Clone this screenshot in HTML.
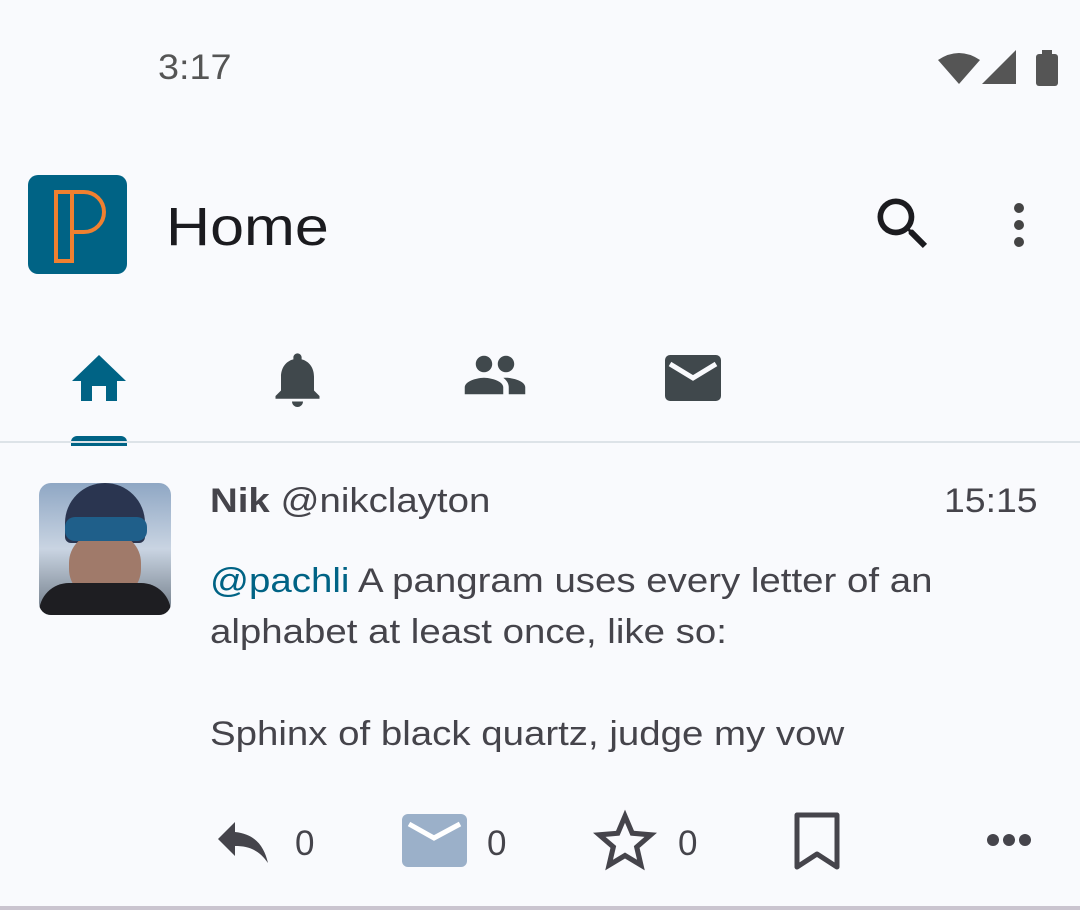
<!DOCTYPE html>
<html><head><meta charset="utf-8"><style>
body{margin:0;width:1080px;height:910px;background:#f9fafd;position:relative;overflow:hidden;font-family:"Liberation Sans",sans-serif;color:#45444b}
.a{position:absolute}
.s{transform-origin:0 0;transform:scaleX(1.13);white-space:nowrap}
</style></head><body>
<div class="a s" style="left:158px;top:48px;font-size:35px;color:#555;transform:scaleX(1.08)">3:17</div>
<svg class="a" style="left:936px;top:48px" width="126" height="40" viewBox="0 0 126 40">
<path d="M2 12 Q23 -2 44 12 L23 36 Z" fill="#555"/>
<path d="M46 36 L80 2 L80 36 Z" fill="#555"/>
<rect x="100" y="6" width="22" height="32" rx="3" fill="#555"/><rect x="106" y="2" width="10" height="6" fill="#555"/>
</svg>
<div class="a" style="left:28px;top:175px;width:99px;height:99px;border-radius:10px;background:#006385"></div>
<svg class="a" style="left:28px;top:175px" width="99" height="99" viewBox="0 0 99 99">
<path d="M28 17 H44 V86 H28 Z M44 17 H56 A20 20 0 0 1 56 57 H44" fill="none" stroke="#f08030" stroke-width="4"/>
<path d="M37 17 V86" stroke="#f08030" stroke-width="0"/>
</svg>
<div class="a s" style="left:166px;top:196px;font-size:54px;color:#1b1b1f">Home</div>
<svg class="a" style="left:868px;top:190px" width="70" height="68" viewBox="0 0 24 24"><path d="M15.5 14h-.79l-.28-.27A6.47 6.47 0 0016 9.5 6.5 6.5 0 109.5 16c1.61 0 3.09-.59 4.23-1.57l.27.28v.79l5 4.99L20.49 19l-4.99-5zm-6 0C7.01 14 5 11.99 5 9.5S7.01 5 9.5 5 14 7.01 14 9.5 11.99 14 9.5 14z" fill="#1b1b1f"/></svg>
<svg class="a" style="left:1008px;top:202px" width="22" height="46"><circle cx="11" cy="6" r="5" fill="#444"/><circle cx="11" cy="23" r="5" fill="#444"/><circle cx="11" cy="40" r="5" fill="#444"/></svg>
<svg class="a" style="left:71px;top:353px" width="56" height="48" viewBox="0 0 56 48"><path d="M28 2 L55 28 H46 V48 H35 V33 H21 V48 H10 V28 H1 Z" fill="#006385"/></svg>
<div class="a" style="left:71px;top:436px;width:56px;height:10px;border-radius:6px 6px 0 0;background:#006385"></div>
<svg class="a" style="left:275px;top:352px" width="45" height="55" viewBox="4 2 16 20"><path d="M12 22c1.1 0 2-.9 2-2h-4c0 1.1.9 2 2 2zm6-6v-5c0-3.07-1.63-5.64-4.5-6.32V4c0-.83-.67-1.5-1.5-1.5s-1.5.67-1.5 1.5v.68C7.64 5.36 6 7.92 6 11v5l-2 2v1h16v-1l-2-2z" fill="#40484c"/></svg>
<svg class="a" style="left:462px;top:342px" width="66" height="66" viewBox="0 0 24 24"><path d="M16 11c1.66 0 2.99-1.340 2.99-3S17.66 5 16 5c-1.66 0-3 1.34-3 3s1.34 3 3 3zm-8 0c1.66 0 2.99-1.34 2.99-3S9.66 5 8 5C6.34 5 5 6.34 5 8s1.34 3 3 3zm0 2c-2.33 0-7 1.17-7 3.5V19h14v-2.5c0-2.33-4.67-3.5-7-3.5zm8 0c-.29 0-.62.02-.97.05 1.16.84 1.970 1.97 1.97 3.45V19h6v-2.5c0-2.33-4.67-3.5-7-3.5z" fill="#40484c"/></svg>
<svg class="a" style="left:665px;top:355px" width="56" height="46" viewBox="0 0 56 46"><rect width="56" height="46" rx="5" fill="#40484c"/><path d="M5 9 L28 23 L51 9" stroke="#f9fafd" stroke-width="5" fill="none"/></svg>
<div class="a" style="left:0;top:441px;width:1080px;height:2px;background:#dde3e8"></div>
<div class="a" style="left:39px;top:483px;width:132px;height:132px;border-radius:12px;overflow:hidden;background:linear-gradient(180deg,#8fa7c4,#c9d4e2 50%,#6f7a86)">
<div class="a" style="left:26px;top:0;width:80px;height:60px;border-radius:40px 40px 6px 6px;background:#2a3550"></div>
<div class="a" style="left:30px;top:50px;width:72px;height:66px;border-radius:30px;background:#a07a6a"></div>
<div class="a" style="left:26px;top:34px;width:82px;height:24px;border-radius:10px;background:#1f5f8a"></div>
<div class="a" style="left:0;top:100px;width:132px;height:40px;border-radius:30px 30px 0 0;background:#1e1e22"></div>
</div>
<div class="a s" style="left:210px;top:482px;font-size:34px"><b>Nik</b> @nikclayton</div>
<div class="a s" style="left:944px;top:482px;font-size:34px;transform:scaleX(1.1)">15:15</div>
<div class="a s" style="left:210px;top:556px;font-size:34px;line-height:51px"><span style="color:#006385">@pachli</span> A pangram uses every letter of an<br>alphabet at least once, like so:<br><br>Sphinx of black quartz, judge my vow</div>
<svg class="a" style="left:217px;top:820px" width="52" height="44" viewBox="0 0 52 44"><path d="M18 2 L1 19 L18 36 V26 C32 26 42 30 51 43 C47 26 38 14 18 12 Z" fill="#45444b"/></svg>
<div class="a" style="left:295px;top:824px;font-size:35px">0</div>
<svg class="a" style="left:402px;top:814px" width="65" height="53" viewBox="0 0 65 53"><rect width="65" height="53" rx="6" fill="#9bb0c9"/><path d="M7 10 L32 24 L58 10" stroke="#fff" stroke-width="5" fill="none"/></svg>
<div class="a" style="left:487px;top:824px;font-size:35px">0</div>
<svg class="a" style="left:593px;top:809px" width="64" height="62" viewBox="2 2 20 19"><path d="M22 9.24l-7.19-.62L12 2 9.19 8.63 2 9.24l5.46 4.73L5.82 21 12 17.27 18.18 21l-1.63-7.03L22 9.24zM12 15.4l-3.76 2.27 1-4.28-3.32-2.88 4.38-.38L12 6.1l1.71 4.04 4.38.38-3.32 2.88 1 4.28L12 15.4z" fill="#45444b"/></svg>
<div class="a" style="left:678px;top:824px;font-size:35px">0</div>
<svg class="a" style="left:794px;top:812px" width="46" height="58" viewBox="0 0 46 58"><path d="M3 3 H43 V55 L23 42 L3 55 Z" fill="none" stroke="#45444b" stroke-width="5" stroke-linejoin="round"/></svg>
<svg class="a" style="left:985px;top:832px" width="48" height="16"><circle cx="8" cy="8" r="6" fill="#45444b"/><circle cx="24" cy="8" r="6" fill="#45444b"/><circle cx="40" cy="8" r="6" fill="#45444b"/></svg>
<div class="a" style="left:0;top:906px;width:1080px;height:4px;background:#cac4cf"></div>
</body></html>
